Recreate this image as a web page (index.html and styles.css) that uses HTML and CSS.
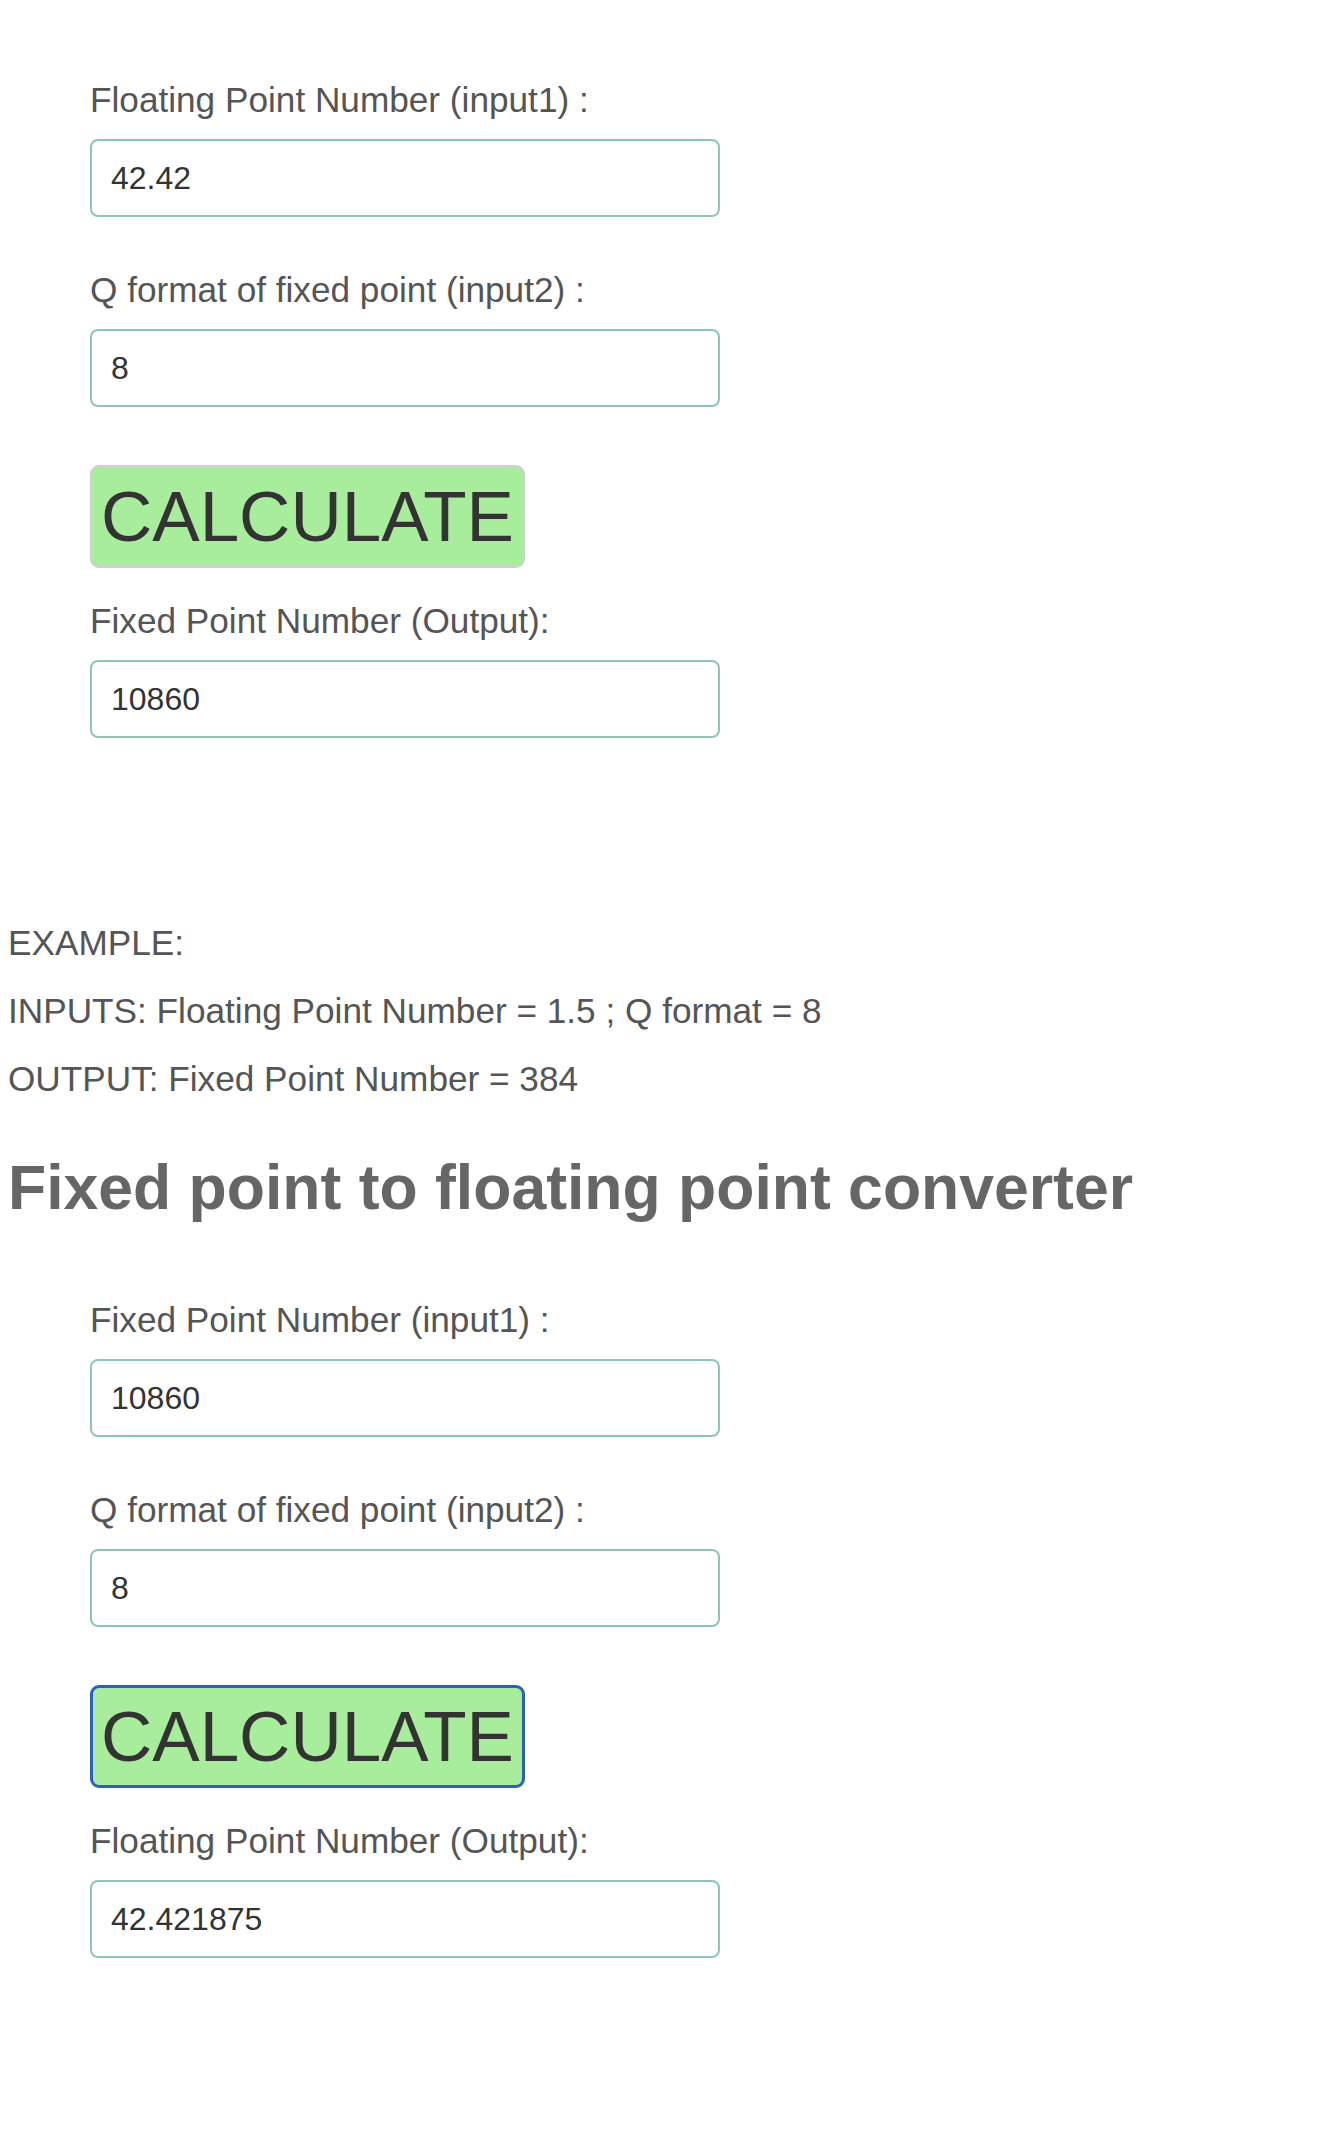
FILE: index.html
```html
<!DOCTYPE html>
<html lang="en">
<head>
<meta charset="utf-8">
<title>Floating point / fixed point converter</title>
<link rel="stylesheet" href="styles.css">
</head>
<body>
<section class="converter converter-first">
  <label class="field-label" for="f1">Floating Point Number (input1) :</label>
  <input class="field-input" id="f1" type="text" value="42.42">
  <label class="field-label field-label-next" for="f2">Q format of fixed point (input2) :</label>
  <input class="field-input" id="f2" type="text" value="8">
  <button class="calc-btn" type="button">CALCULATE</button>
  <label class="field-label" for="f3">Fixed Point Number (Output):</label>
  <input class="field-input" id="f3" type="text" value="10860">
</section>

<div class="example">
  <p class="example-line">EXAMPLE:</p>
  <p class="example-line">INPUTS: Floating Point Number = 1.5 ; Q format = 8</p>
  <p class="example-line">OUTPUT: Fixed Point Number = 384</p>
</div>

<h2 class="section-title">Fixed point to floating point converter</h2>

<section class="converter">
  <label class="field-label" for="g1">Fixed Point Number (input1) :</label>
  <input class="field-input" id="g1" type="text" value="10860">
  <label class="field-label field-label-next" for="g2">Q format of fixed point (input2) :</label>
  <input class="field-input" id="g2" type="text" value="8">
  <button class="calc-btn calc-btn-focused" type="button">CALCULATE</button>
  <label class="field-label" for="g3">Floating Point Number (Output):</label>
  <input class="field-input" id="g3" type="text" value="42.421875">
</section>
</body>
</html>
```

FILE: styles.css
```css
html, body {
  background: #ffffff;
}

body {
  margin: 8px;
  font-family: "Liberation Sans", Arial, Helvetica, sans-serif;
  color: #555555;
}

.converter {
  display: flex;
  flex-direction: column;
  align-items: flex-start;
  padding-left: 82px;
  padding-top: 77px;
}

.converter-first {
  padding-top: 72px;
}

.field-label {
  display: block;
  font-size: 35.2px;
  line-height: 40px;
  color: #555555;
  margin-bottom: 19px;
}

.field-label-next {
  margin-top: 53px;
}

.field-input {
  display: block;
  box-sizing: border-box;
  width: 630px;
  height: 78px;
  margin: 0;
  padding: 0 19px;
  border: 2px solid #8cc7b4;
  border-radius: 8px;
  background: #ffffff;
  font-family: "Liberation Sans", Arial, Helvetica, sans-serif;
  font-size: 32px;
  color: #333333;
  outline: none;
}

.calc-btn {
  display: block;
  box-sizing: border-box;
  margin: 58px 0 33px 0;
  height: 103px;
  padding: 0 9px;
  border: 2px solid #d0d0d0;
  border-radius: 9px;
  background: #a8ed9b;
  font-family: "Liberation Sans", Arial, Helvetica, sans-serif;
  font-size: 71px;
  line-height: 80px;
  color: #333333;
  cursor: pointer;
}

.calc-btn-focused {
  border: 3px solid #2b5fc6;
  padding: 0 8px;
}

.example {
  padding-top: 185px;
}

.example-line {
  margin: 0 0 28px 0;
  font-size: 35.2px;
  line-height: 40px;
  color: #555555;
}

.example-line:last-child {
  margin-bottom: 0;
}

.section-title {
  margin: 52px 0 0 0;
  font-size: 62.5px;
  line-height: 72px;
  font-weight: bold;
  color: #666666;
}
```
